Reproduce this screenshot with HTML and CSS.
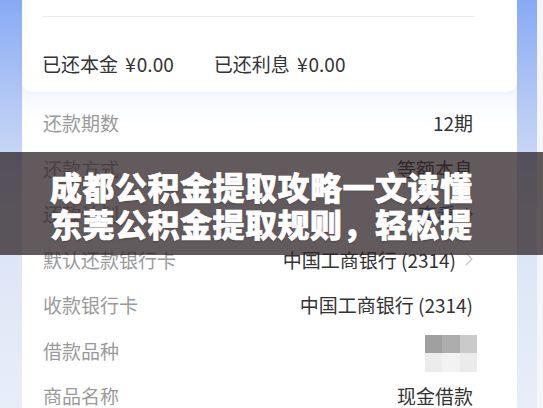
FILE: index.html
```html
<!DOCTYPE html>
<html lang="zh-CN">
<head>
    <meta charset="UTF-8">
    <meta name="viewport" content="width=device-width, initial-scale=1.0">
    <title>借款详情</title>
    <link rel="stylesheet" href="styles.css">
</head>
<body>
    <div class="screen">
        <div class="content">
            <div class="summary-card">
                <div class="summary-top"></div>
                <div class="summary-row">
                    <span class="paid">已还本金 <span class="yen">¥</span>0.00</span>
                    <span class="paid">已还利息 <span class="yen">¥</span>0.00</span>
                </div>
            </div>
            <div class="detail-card">
                <div class="row"><span class="label">还款期数</span><span class="value">12期</span></div>
                <div class="row"><span class="label">还款方式</span><span class="value">等额本息</span></div>
                <div class="row"><span class="label">还款计划</span><span class="value link">查看 <svg class="chev" width="8" height="14" viewBox="0 0 8 14"><polyline points="1,1 7,7 1,13" fill="none" stroke="#3355cc" stroke-width="1.2"/></svg></span></div>
                <div class="row"><span class="label">默认还款银行卡</span><span class="value">中国工商银行 (2314) <svg class="chev" width="8" height="14" viewBox="0 0 8 14"><polyline points="1,1 7,7 1,13" fill="none" stroke="#c4c4c4" stroke-width="1.2"/></svg></span></div>
                <div class="row"><span class="label">收款银行卡</span><span class="value">中国工商银行 (2314)</span></div>
                <div class="row">
                    <span class="label">借款品种</span>
                    <span class="mosaic">
                        <i class="m1"></i><i class="m2"></i><i class="m3"></i>
                        <i class="m4"></i><i class="m5"></i><i class="m6"></i>
                    </span>
                </div>
                <div class="row"><span class="label">商品名称</span><span class="value">现金借款</span></div>
            </div>
        </div>
    </div>
    <div class="banner">
        <div>成都公积金提取攻略一文读懂</div>
        <div>东莞公积金提取规则，轻松提</div>
    </div>
</body>
</html>
```

FILE: styles.css
```css
body {
    margin: 0;
    width: 543px;
    height: 408px;
    overflow: hidden;
    position: relative;
    background-color: #f4f6fa;
    font-family: "Noto Sans CJK SC", sans-serif;
}
.screen {
    width: 537px;
    height: 408px;
    background: linear-gradient(to bottom, #88aaf5 0%, #b3c8f5 25%, #d9e3f6 50%, #e8eef8 100%);
}
.content {
    margin: 0 20px 0 22px;
    height: 408px;
    display: flex;
    flex-direction: column;
    background-color: #f5f8fd;
}
.summary-card {
    background-color: #fff;
    border-radius: 0 0 10px 10px;
    padding: 0 42px 0 20px;
    box-shadow: 0 2px 4px rgba(150, 170, 210, 0.08);
}
.summary-top {
    height: 16px;
    border-bottom: 1px solid #ececef;
}
.summary-row {
    display: flex;
    gap: 40px;
    padding: 34px 0 16px;
    line-height: 25px;
    font-size: 19px;
    color: #333;
}
.yen {
    margin: 0 1px 0 3px;
}
.detail-card {
    flex: 1;
    margin-top: 3px;
    border-radius: 10px 10px 0 0;
    background: linear-gradient(to bottom, #f5f8fd 0, #fff 30px);
    padding: 5px 44px 0 21px;
}
.row {
    height: 45.5px;
    display: flex;
    align-items: center;
    justify-content: space-between;
    font-size: 19px;
}
.label {
    color: #9a9a9a;
}
.value {
    color: #333;
    display: flex;
    align-items: center;
    gap: 3px;
}
.value.link {
    color: #3355cc;
}
.chev {
    margin-left: 6px;
}
.mosaic {
    display: grid;
    grid-template-columns: repeat(3, 17.5px);
    grid-template-rows: 18px 19px;
    margin-top: 6px;
    margin-right: -4px;
    filter: blur(0.6px);
}
.mosaic i { display: block; }
.m1 { background: #a0a0a0; }
.m2 { background: #adadad; }
.m3 { background: #cacaca; }
.m4 { background: #ececec; }
.m5 { background: #f2f2f2; }
.m6 { background: #ebebeb; }
.banner {
    position: absolute;
    top: 152px;
    left: 0;
    right: 0;
    height: 103px;
    box-sizing: border-box;
    padding: 16px 0 0 50px;
    background-color: rgba(45, 35, 37, 0.75);
    color: #fff;
    font-family: "Noto Sans CJK SC", sans-serif;
    font-weight: 900;
    font-size: 32px;
    letter-spacing: 0.5px;
    line-height: 37px;
    white-space: nowrap;
    overflow: hidden;
    -webkit-text-stroke: 0.6px #fff;
    text-shadow: 0 1px 2px rgba(0, 0, 0, 0.3);
}
```
